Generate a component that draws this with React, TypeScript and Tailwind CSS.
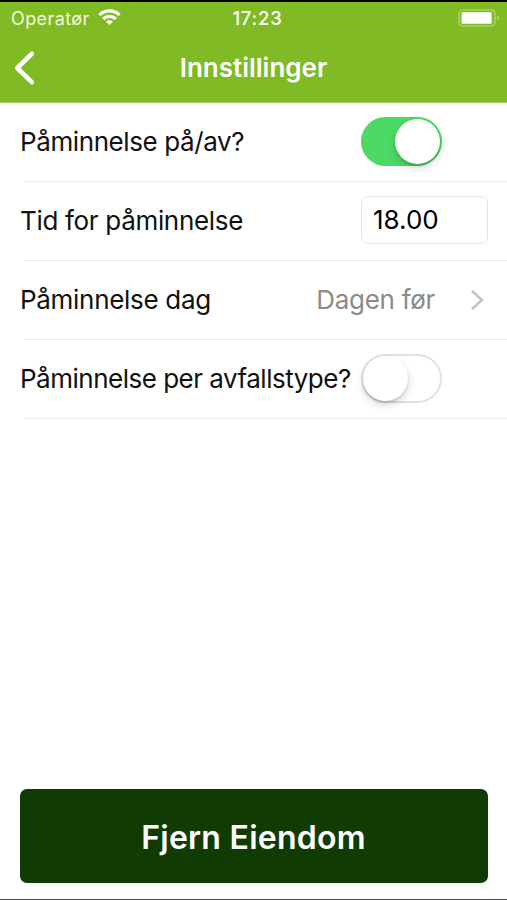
import type { ReactNode } from "react";

function StatusBar() {
  return (
    <div className="flex h-[33px] items-center text-[18px] leading-none text-white">
      <div className="flex flex-1 items-center pl-[11px]">
        <span className="tracking-[0.4px] text-[#f1fbd9]">Operatør</span>
        <svg className="mb-[3px] ml-[8px]" width="23" height="16" viewBox="0 0 23 16" fill="none" stroke="currentColor" strokeWidth="3.2">
          <path d="M1.4 6.1a14.3 14.3 0 0 1 20.2 0" />
          <path d="M5.2 10a8.9 8.9 0 0 1 12.6 0" />
          <path d="M11.5 15.9L8 12.6a5 5 0 0 1 7 0z" fill="currentColor" stroke="none" />
        </svg>
      </div>
      <span className="translate-x-[2px] text-[18.5px] font-medium tracking-[0.8px]">17:23</span>
      <div className="flex flex-1 justify-end pr-[7px] pb-[2px]">
        <svg width="42" height="18" viewBox="0 0 42 18">
          <rect x="1" y="1" width="36" height="16" rx="4" fill="none" stroke="#a9d268" strokeWidth="1.6" />
          <rect x="3.5" y="3.3" width="30.2" height="11.4" rx="1.3" fill="white" />
          <path d="M39.2 6.2v5.6c2-1 2-4.6 0-5.6z" fill="#b4d978" />
        </svg>
      </div>
    </div>
  );
}

function Toggle({ on }: { on: boolean }) {
  return (
    <div
      className={
        on
          ? "flex h-[49px] w-[81px] items-center justify-end rounded-full bg-[#4cd964] pr-[2px]"
          : "flex h-[49px] w-[81px] items-center rounded-full border-2 border-[#e2e2e2] bg-white"
      }
    >
      <div className="size-[45px] rounded-full bg-white shadow-[0_4px_9px_rgba(0,0,0,0.16),0_2px_2px_rgba(0,0,0,0.12)]" />
    </div>
  );
}

function Row({ label, children }: { label: ReactNode; children: ReactNode }) {
  return (
    <div className="flex h-[79px] flex-col">
      <div className="flex min-h-0 flex-1 items-center justify-between pl-[20px]">
        {label}
        {children}
      </div>
      <div className="ml-[24px] h-px shrink-0 bg-[#ebebeb]" />
    </div>
  );
}

export default function App() {
  return (
    <div className="flex h-[900px] w-[507px] flex-col overflow-hidden border-b border-[#4a4a4a] bg-white font-['Inter','Liberation_Sans',sans-serif] whitespace-nowrap text-[#111]">
      <header className="h-[103px] shrink-0 border-t-2 border-b border-t-black border-b-[#a2cc5d] bg-[#80ba25]">
        <StatusBar />
        <div className="grid h-[66px] grid-cols-[1fr_auto_1fr] items-center text-white">
          <svg className="ml-[13px]" width="24" height="36" viewBox="0 0 24 36" fill="none" stroke="currentColor" strokeWidth="4.6" strokeLinecap="round" strokeLinejoin="round">
            <path d="M18.8 3.8L4.2 18L18.8 32.2" />
          </svg>
          <h1 className="text-[26px] leading-none font-semibold">Innstillinger</h1>
          <span />
        </div>
      </header>

      <main className="text-[26px] leading-none">
        <Row label={<span className="tracking-[-0.4px]">Påminnelse på/av?</span>}>
          <div className="mr-[65px] mb-[2px]"><Toggle on /></div>
        </Row>
        <Row label={<span className="tracking-[-0.32px]">Tid for påminnelse</span>}>
          <div className="mr-[19px] mb-[2px] flex h-[48px] w-[127px] items-center rounded-[7px] border border-[#e6e6e6] pb-px pl-[11px] text-black">
            <span>18.00</span>
          </div>
        </Row>
        <Row label={<span className="tracking-[-0.3px]">Påminnelse dag</span>}>
          <div className="flex items-center pr-[22px] text-[#8a8a8a]">
            <span className="tracking-[-0.3px]">Dagen før</span>
            <svg className="ml-[35px]" width="15" height="22" viewBox="0 0 15 22" fill="none" stroke="#c3c3c6" strokeWidth="2.6">
              <path d="M2 2L12 11L2 20" />
            </svg>
          </div>
        </Row>
        <Row label={<span className="tracking-[-0.5px]">Påminnelse per avfallstype?</span>}>
          <div className="mr-[65px] mb-[2px]"><Toggle on={false} /></div>
        </Row>
      </main>

      <button className="mx-auto mt-auto mb-[16px] h-[94px] w-[468px] shrink-0 rounded-[7px] bg-[#103b02] pt-[3px] text-[32px] leading-none font-semibold tracking-[0.25px] text-white">
        Fjern Eiendom
      </button>
    </div>
  );
}
